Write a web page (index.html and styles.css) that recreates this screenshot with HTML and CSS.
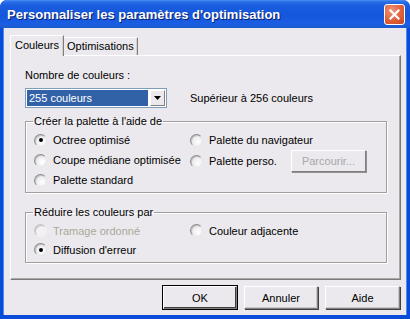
FILE: index.html
```html
<!DOCTYPE html>
<html lang="fr">
<head>
  <meta charset="UTF-8">
  <meta name="viewport" content="width=device-width, initial-scale=1.0">
  <title>Personnaliser les paramètres d'optimisation</title>
  <link rel="stylesheet" href="styles.css">
</head>
<body>
  <div class="window">
    <div class="titlebar">
      <span class="title">Personnaliser les paramètres d'optimisation</span>
      <button class="close" title="Fermer">
        <svg width="11" height="11" viewBox="0 0 11 11">
          <path d="M1.5 1.5 L9.5 9.5 M9.5 1.5 L1.5 9.5" stroke="#fff" stroke-width="2.2" stroke-linecap="square"/>
        </svg>
      </button>
    </div>

    <div class="client">
      <!-- onglets -->
      <div class="tabs">
        <div class="tab active">Couleurs</div>
        <div class="tab">Optimisations</div>
      </div>

      <div class="panel">
        <div class="label">Nombre de couleurs :</div>
        <div class="count-row">
          <div class="combo">
            <span class="combo-value">255 couleurs</span>
            <span class="combo-btn">
              <svg width="7" height="4" viewBox="0 0 7 4"><path d="M0 0 H7 L3.5 4 Z" fill="#000"/></svg>
            </span>
          </div>
          <span>Supérieur à 256 couleurs</span>
        </div>

        <fieldset class="group palette">
          <legend>Créer la palette à l'aide de</legend>
          <label class="radio"><span class="dot checked"></span>Octree optimisé</label>
          <label class="radio"><span class="dot"></span>Palette du navigateur</label>
          <label class="radio"><span class="dot"></span>Coupe médiane optimisée</label>
          <div class="custom">
            <label class="radio"><span class="dot"></span>Palette perso.</label>
            <button class="btn browse" disabled>Parcourir...</button>
          </div>
          <label class="radio"><span class="dot"></span>Palette standard</label>
        </fieldset>

        <fieldset class="group reduce">
          <legend>Réduire les couleurs par</legend>
          <label class="radio disabled"><span class="dot"></span>Tramage ordonné</label>
          <label class="radio"><span class="dot"></span>Couleur adjacente</label>
          <label class="radio"><span class="dot checked"></span>Diffusion d'erreur</label>
        </fieldset>
      </div>

      <div class="actions">
        <button class="btn default">OK</button>
        <button class="btn">Annuler</button>
        <button class="btn">Aide</button>
      </div>
    </div>
  </div>
</body>
</html>
```

FILE: styles.css
```css
* {
  box-sizing: border-box;
}
body {
  margin: 0;
  background: #fff;
  font-family: "Liberation Sans", Arial, sans-serif;
  font-size: 11px;
  color: #000;
}
.window {
  width: 410px;
  height: 319px;
  display: flex;
  flex-direction: column;
  border-radius: 7px 7px 0 0;
  overflow: hidden;
  background: #0a4bd8;
}
.titlebar {
  height: 28px;
  flex: none;
  display: flex;
  align-items: center;
  justify-content: space-between;
  padding: 0 5px 0 7px;
  background: linear-gradient(#4a8cf2 0%, #2a6de8 7%, #1a5ddf 20%, #1556dc 55%, #1a5ee3 85%, #1b5acd 100%);
}
.title {
  color: #fff;
  font-weight: bold;
  font-size: 13px;
  text-shadow: 1px 1px 0 #0a1e6a;
}
.close {
  width: 21px;
  height: 21px;
  padding: 0;
  border: 1px solid #fff;
  border-radius: 3px;
  background: radial-gradient(circle at 35% 30%, #f0957a, #e0603a 55%, #c8451e);
  display: flex;
  align-items: center;
  justify-content: center;
}
.client {
  flex: 1;
  margin: 0 4px 4px;
  background: #ebe9ed;
  padding: 7px 5px 6px 6px;
  display: flex;
  flex-direction: column;
  box-shadow: -1px 0 0 #4d8cf0, 1px 0 0 #4d8cf0;
}
.tabs {
  display: flex;
  height: 20px;
  flex: none;
  align-items: flex-start;
}
.tab {
  height: 18px;
  margin-top: 2px;
  padding: 0 3px;
  line-height: 17px;
  border: 1px solid #fff;
  border-right-color: #808080;
  border-bottom: none;
  box-shadow: inset -1px 0 0 #d4d0c8;
}
.tab.active {
  height: 21px;
  margin-top: 0;
  line-height: 19px;
  padding: 0 4px;
  position: relative;
  z-index: 1;
  background: #ebe9ed;
}
.tab + .tab {
  border-left: none;
}
.panel {
  height: 225px;
  flex: none;
  border: 1px solid #fff;
  border-right-color: #7a7a7a;
  border-bottom-color: #7a7a7a;
  box-shadow: inset -1px -1px 0 #a8a8a8;
  padding: 13px 0 0 14px;
}
.label {
  height: 13px;
  line-height: 13px;
}
.count-row {
  display: grid;
  grid-template-columns: 165px auto;
  align-items: center;
  margin-top: 6px;
}
.combo {
  width: 142px;
  height: 20px;
  border: 1px solid #7f9db9;
  background: #fff;
  display: flex;
  padding: 1px;
}
.combo-value {
  flex: 1;
  background: #3162a8;
  color: #fff;
  line-height: 16px;
  padding-left: 2px;
}
.combo-btn {
  width: 15px;
  margin-left: 2px;
  display: flex;
  align-items: center;
  justify-content: center;
  background: #ebe9ed;
  border: 1px solid #fff;
  border-right-color: #808080;
  border-bottom-color: #808080;
}
.group {
  width: 362px;
  margin: 7px 0 0 0;
  padding: 0 0 2px 8px;
  border: 1px solid #a0a0a0;
  box-shadow: inset 1px 1px 0 #fff, 1px 1px 0 #fff;
  display: grid;
  grid-template-columns: 156px 1fr;
}
.group legend {
  padding: 0 1px;
  margin-left: -1px;
  line-height: 13px;
}
.palette {
  grid-auto-rows: 20px;
  padding-top: 2px;
}
.reduce {
  grid-auto-rows: 19px;
  margin-top: 13px;
  padding-top: 2px;
  padding-bottom: 3px;
}
.radio {
  display: flex;
  align-items: center;
  gap: 6px;
}
.radio.disabled {
  color: #aca899;
}
.dot {
  width: 13px;
  height: 13px;
  border-radius: 50%;
  border: 1px solid;
  border-color: #8c8c8c #e6e6e6 #e6e6e6 #8c8c8c;
  background: radial-gradient(circle at 65% 65%, #fff, #eceaea 60%, #d6d4d8);
  box-shadow: inset 1px 1px 0 #c4c2c6;
  display: flex;
  align-items: center;
  justify-content: center;
}
.dot.checked::after {
  content: "";
  width: 4px;
  height: 4px;
  border-radius: 50%;
  background: #000;
}
.disabled .dot {
  background: #f2f1f3;
  border-color: #c8c6c8 #f0f0f0 #f0f0f0 #c8c6c8;
}
.custom {
  display: grid;
  grid-template-columns: 101px auto;
  align-items: center;
}
.btn {
  font-family: inherit;
  font-size: 11px;
  width: 74px;
  height: 23px;
  padding: 0;
  background: #ebe9ed;
  color: #000;
  border: 1px solid;
  border-color: #fff #808080 #808080 #fff;
  box-shadow: 1px 1px 0 #404040, inset -1px -1px 0 #c8c6c8;
}
.browse {
  width: 75px;
  height: 22px;
  color: #a8a8a8;
  box-shadow: 1px 1px 0 #909090;
}
.btn.default {
  outline: 1px solid #000;
  box-shadow: inset -1px -1px 0 #404040;
}
.actions {
  display: flex;
  justify-content: flex-end;
  gap: 7px;
  margin-top: 6px;
  padding-right: 1px;
}
.actions .btn:last-child {
  width: 75px;
}
```
